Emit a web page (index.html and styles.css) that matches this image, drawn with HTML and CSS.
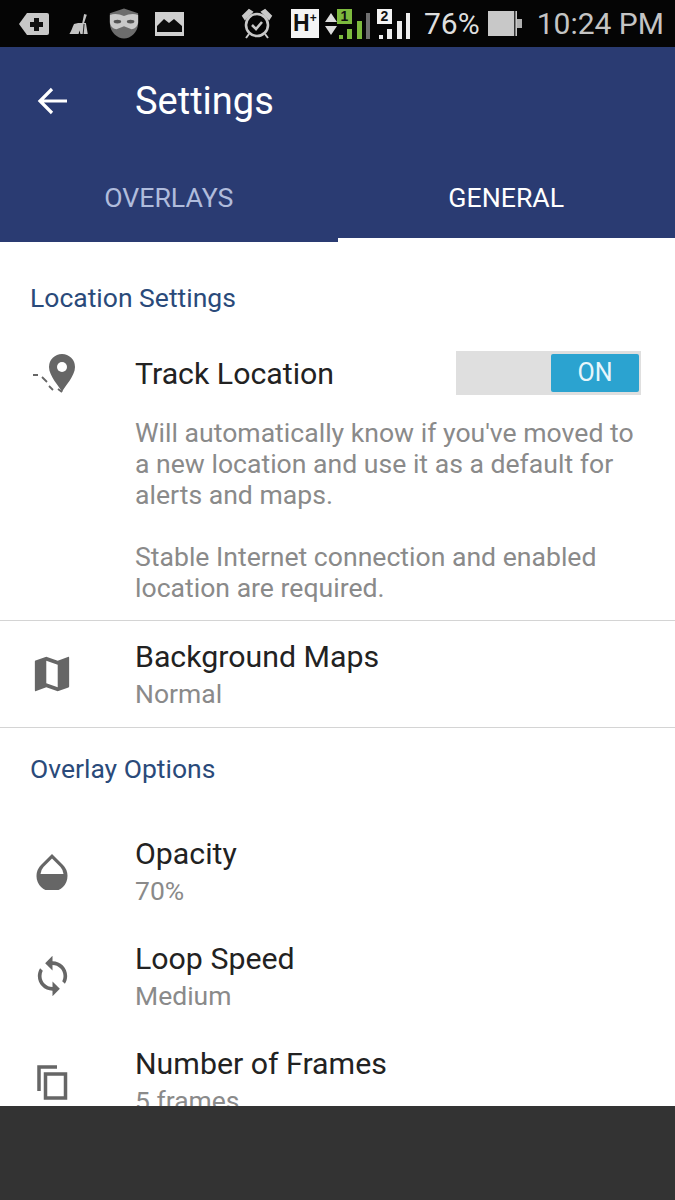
FILE: index.html
```html
<!DOCTYPE html>
<html lang="en">
<head>
<meta charset="utf-8">
<title>Settings</title>
<link rel="stylesheet" href="styles.css">
</head>
<body>
<div class="screen">
  <div class="status">
    <svg class="si s-add" viewBox="0 0 30 24"><path d="M8 1h20a2 2 0 0 1 2 2v18a2 2 0 0 1-2 2H8L0 12z" fill="#c8c8c8"/><path d="M15 6h5v4h4v5h-4v4h-5v-4h-4v-5h4z" fill="#111"/></svg>
    <svg class="si s-broom" viewBox="0 0 24 24"><path d="M17 1l3 1-3 9h2l2 12H13l-1-4-1 4H1c2-3 3-7 5-11 3-1 6-1 9-1z" fill="#c4c4c4"/><path d="M17 12l-1 11" stroke="#111"/></svg>
    <svg class="si s-mask" viewBox="0 0 34 32"><path d="M17 0l15 5v11c0 9-8 16-15 16S2 25 2 16V5z" fill="#6d6d6d"/><path d="M2 7c5-2 10-1 15 1 5-2 10-3 15-1v8c-1 5-4 7-7 7l-8-3-8 3c-3 0-6-2-7-7z" fill="#c9c9c9"/><ellipse cx="10" cy="14" rx="4" ry="2" fill="#555"/><ellipse cx="24" cy="14" rx="4" ry="2" fill="#555"/></svg>
    <svg class="si s-img" viewBox="0 0 29 24"><rect width="29" height="24" fill="#d0d0d0"/><path d="M2 20v-6l7-7 5 4 5-4 8 7v6z" fill="#0a0a0a"/></svg>
    <svg class="si s-alarm" viewBox="0 0 32 32"><circle cx="16" cy="17" r="11" fill="none" stroke="#c8c8c8" stroke-width="2.6"/><path d="M2 8l6-6 3 2-7 7zM30 8l-6-6-3 2 7 7zM8 26l-3 4M24 26l3 4" fill="#c8c8c8" stroke="#c8c8c8" stroke-width="2"/><path d="M11 17l4 4 6-7" fill="none" stroke="#c8c8c8" stroke-width="2.6"/></svg>
    <span class="hplus">H<sup>+</sup></span>
    <svg class="si s-arrows" viewBox="0 0 14 24"><path d="M7 1l6 9H1zM7 23l6-9H1z" fill="#dcdcdc"/></svg>
    <div class="sim">
      <span class="simnum green">1</span>
      <svg class="si s-bars" viewBox="0 0 33 30"><rect x="2" y="26" width="4" height="4" fill="#7dba3e"/><rect x="10" y="20" width="5" height="10" fill="#7dba3e"/><rect x="20" y="12" width="5" height="18" fill="#7dba3e"/><rect x="29" y="4" width="4" height="26" fill="#6f6f6f"/></svg>
    </div>
    <div class="sim sim2">
      <span class="simnum white">2</span>
      <svg class="si s-bars" viewBox="0 0 33 30"><rect x="2" y="26" width="4" height="4" fill="#eee"/><rect x="10" y="20" width="5" height="10" fill="#eee"/><rect x="20" y="12" width="5" height="18" fill="#eee"/><rect x="29" y="4" width="4" height="26" fill="#eee"/></svg>
    </div>
    <span class="st pct">76%</span>
    <svg class="si s-batt" viewBox="0 0 34 25"><path d="M0 0h29v25H0z" fill="#c8c8c8"/><path d="M26 0h1.500v25H26z" fill="#333"/><path d="M29 8h5v9h-5z" fill="#b0b0b0"/></svg>
    <span class="st time">10:24 PM</span>
  </div>

  <header class="appbar">
    <div class="titlebar">
      <svg class="back" viewBox="0 0 32 28"><path d="M30 14H4M15 2L3 14l12 12" fill="none" stroke="#fff" stroke-width="3.200"/></svg>
      <h1 class="title">Settings</h1>
    </div>
    <nav class="tabs">
      <div class="tab">OVERLAYS</div>
      <div class="tab active">GENERAL</div>
    </nav>
  </header>

  <main class="content">
    <h2 class="section first">Location Settings</h2>
    <section class="row track">
      <svg class="icon pin" viewBox="0 0 44 40"><path d="M30 0a13 13 0 0 0-13 13c0 9 10 19 13 25 3-6 13-16 13-25A13 13 0 0 0 30 0z" fill="#666"/><circle cx="30" cy="13" r="5" fill="#fff"/><path d="M1 21h5M10 23l5 5M17 32l4 4M26 35l4 3" fill="none" stroke="#666" stroke-width="1.800"/></svg>
      <div class="rowbody">
        <div class="trackhead">
          <div class="rowtitle">Track Location</div>
          <div class="toggle"><span class="knob">ON</span></div>
        </div>
        <p class="desc">Will automatically know if you've moved to a new location and use it as a default for alerts and maps.</p>
        <p class="desc gap">Stable Internet connection and enabled location are required.</p>
      </div>
    </section>
    <section class="row maps">
      <svg class="icon" viewBox="1.500 1.500 21 21"><path d="M20.500 3l-.16.03L15 5.100 9 3 3.360 4.900c-.21.07-.36.25-.36.48V20.500c0 .28.22.5.5.5l.16-.03L9 18.900l6 2.100 5.640-1.900c.21-.07.36-.25.36-.48V3.500c0-.28-.22-.5-.5-.5zM15 19l-6-2.110V5l6 2.110V19z" fill="#666"/></svg>
      <div class="rowbody">
        <div class="rowtitle">Background Maps</div>
        <div class="rowsub">Normal</div>
      </div>
    </section>
    <h2 class="section second">Overlay Options</h2>
    <section class="row item">
      <svg class="icon drop" viewBox="0 0 40 40"><path d="M20 4L9 15a15.500 15.500 0 1 0 22 0z" fill="#666"/><path d="M20 8.500L11.500 17a12 12 0 0 0-3 7h23a12 12 0 0 0-3-7z" fill="#fff"/></svg>
      <div class="rowbody">
        <div class="rowtitle">Opacity</div>
        <div class="rowsub">70%</div>
      </div>
    </section>
    <section class="row item">
      <svg class="icon loop" viewBox="3 0 18 24"><path d="M12 4V1L8 5l4 4V6c3.310 0 6 2.690 6 6 0 1.010-.25 1.970-.7 2.800l1.460 1.460C19.540 15.030 20 13.570 20 12c0-4.420-3.580-8-8-8zm0 14c-3.310 0-6-2.690-6-6 0-1.010.25-1.970.7-2.800L5.240 7.740C4.460 8.970 4 10.430 4 12c0 4.420 3.580 8 8 8v3l4-4-4-4v3z" fill="#666"/></svg>
      <div class="rowbody">
        <div class="rowtitle">Loop Speed</div>
        <div class="rowsub">Medium</div>
      </div>
    </section>
    <section class="row item">
      <svg class="icon copy" viewBox="0 0 40 40"><path d="M24 4H6v24" fill="none" stroke="#666" stroke-width="3.500"/><rect x="12.500" y="11" width="20" height="24" fill="none" stroke="#666" stroke-width="3.500"/></svg>
      <div class="rowbody">
        <div class="rowtitle">Number of Frames</div>
        <div class="rowsub">5 frames</div>
      </div>
    </section>
  </main>
  <footer class="navbar"></footer>
</div>
</body>
</html>
```
FILE: styles.css
```css
* { box-sizing: border-box; }
html, body { margin: 0; padding: 0; }
body { font-family: Roboto, "Liberation Sans", sans-serif; background: #fff; }
.screen { width: 675px; height: 1200px; display: flex; flex-direction: column; overflow: hidden; }

.status { height: 47px; flex: none; background: #050505; display: flex; align-items: center; padding-left: 19px; color: #dcdcdc; }
.si { display: block; flex: none; }
.s-add { width: 30px; height: 24px; }
.s-broom { width: 23px; height: 22px; margin-left: 19px; }
.s-mask { width: 32px; height: 31px; margin-left: 17px; }
.s-img { width: 29px; height: 24px; margin-left: 15px; }
.s-alarm { width: 32px; height: 32px; margin-left: 57px; }
.hplus { width: 28px; height: 29px; margin-left: 18px; background: #f4f4f4; color: #111; font: 700 23px/29px "Liberation Sans", sans-serif; padding-left: 2px; white-space: nowrap; overflow: hidden; }
.hplus sup { font-size: 12px; line-height: 0; }
.s-arrows { width: 14px; height: 24px; margin-left: 5px; }
.sim { width: 33px; height: 30px; margin-left: -1px; position: relative; }
.sim2 { margin-left: 7px; }
.s-bars { width: 33px; height: 30px; }
.simnum { position: absolute; left: 0; top: 0; width: 15px; height: 15px; font: 700 14px/15px "Liberation Sans", sans-serif; text-align: center; color: #111; }
.green { background: #7dba3e; }
.white { background: #f4f4f4; }
.st { font-size: 30px; line-height: 47px; color: #dedede; white-space: nowrap; }
.pct { margin-left: 14px; }
.s-batt { width: 34px; height: 25px; margin-left: 8px; }
.time { margin-left: 15px; color: #c4c4c4; }

.appbar { height: 195px; flex: none; background: #2a3b72; display: flex; flex-direction: column; }
.titlebar { height: 108px; display: flex; align-items: center; padding-left: 37px; }
.back { width: 32px; height: 28px; flex: none; }
.title { margin: 0 0 0 66px; font-size: 38px; font-weight: 400; color: #fff; line-height: 106px; }
.tabs { flex: 1; display: flex; }
.tab { width: 50%; text-align: center; font-size: 26.7px; line-height: 87px; color: #b0bcdc; }
.tab.active { color: #fff; box-shadow: inset 0 -4px #fff; }

.content { flex: 1; min-height: 0; overflow: hidden; background: #fff; }
.section { margin: 0; font-size: 26.5px; font-weight: 400; line-height: 30px; color: #2a4a7a; padding-left: 30px; }
.section.first { padding-top: 41px; }
.section.second { padding-top: 26px; margin-bottom: 51px; }

.row { display: grid; grid-template-columns: 135px 1fr; }
.icon { display: block; width: 40px; height: 40px; margin-left: 32px; }
.icon.pin { width: 44px; height: 40px; margin-top: -1px; }
.icon.drop { margin-top: 15px; }
.icon.loop { width: 33px; height: 44px; margin-left: 36px; margin-top: 14px; }
.icon.copy { margin-left: 33px; margin-top: 18px; }
.track { padding-top: 42px; padding-bottom: 17px; border-bottom: 1px solid #d4d4d4; }
.trackhead { display: flex; justify-content: space-between; align-items: center; padding-right: 34px; height: 38px; margin-bottom: 24px; }
.maps { padding-top: 17px; padding-bottom: 13px; border-bottom: 1px solid #d4d4d4; }
.maps .icon { margin-top: 16px; }
.item { padding-bottom: 29px; }

.rowtitle { font-size: 30.3px; line-height: 38px; color: #222; }
.rowsub { font-size: 26.5px; line-height: 38px; margin-top: -1px; margin-bottom: 1px; color: #8a8a8a; }
.desc { margin: 0; padding-right: 30px; font-size: 26.6px; line-height: 31px; color: #8a8a8a; }
.desc.gap { margin-top: 31px; }

.toggle { width: 185px; height: 44px; margin-top: -3px; background: #dfdfdf; padding: 3px 2px 3px 95px; flex: none; }
.knob { display: block; height: 38px; background: #2ba3d0; border-radius: 2px; color: #e8f6fb; font-size: 25px; line-height: 38px; text-align: center; }

.navbar { height: 94px; flex: none; background: #333333; }
```
